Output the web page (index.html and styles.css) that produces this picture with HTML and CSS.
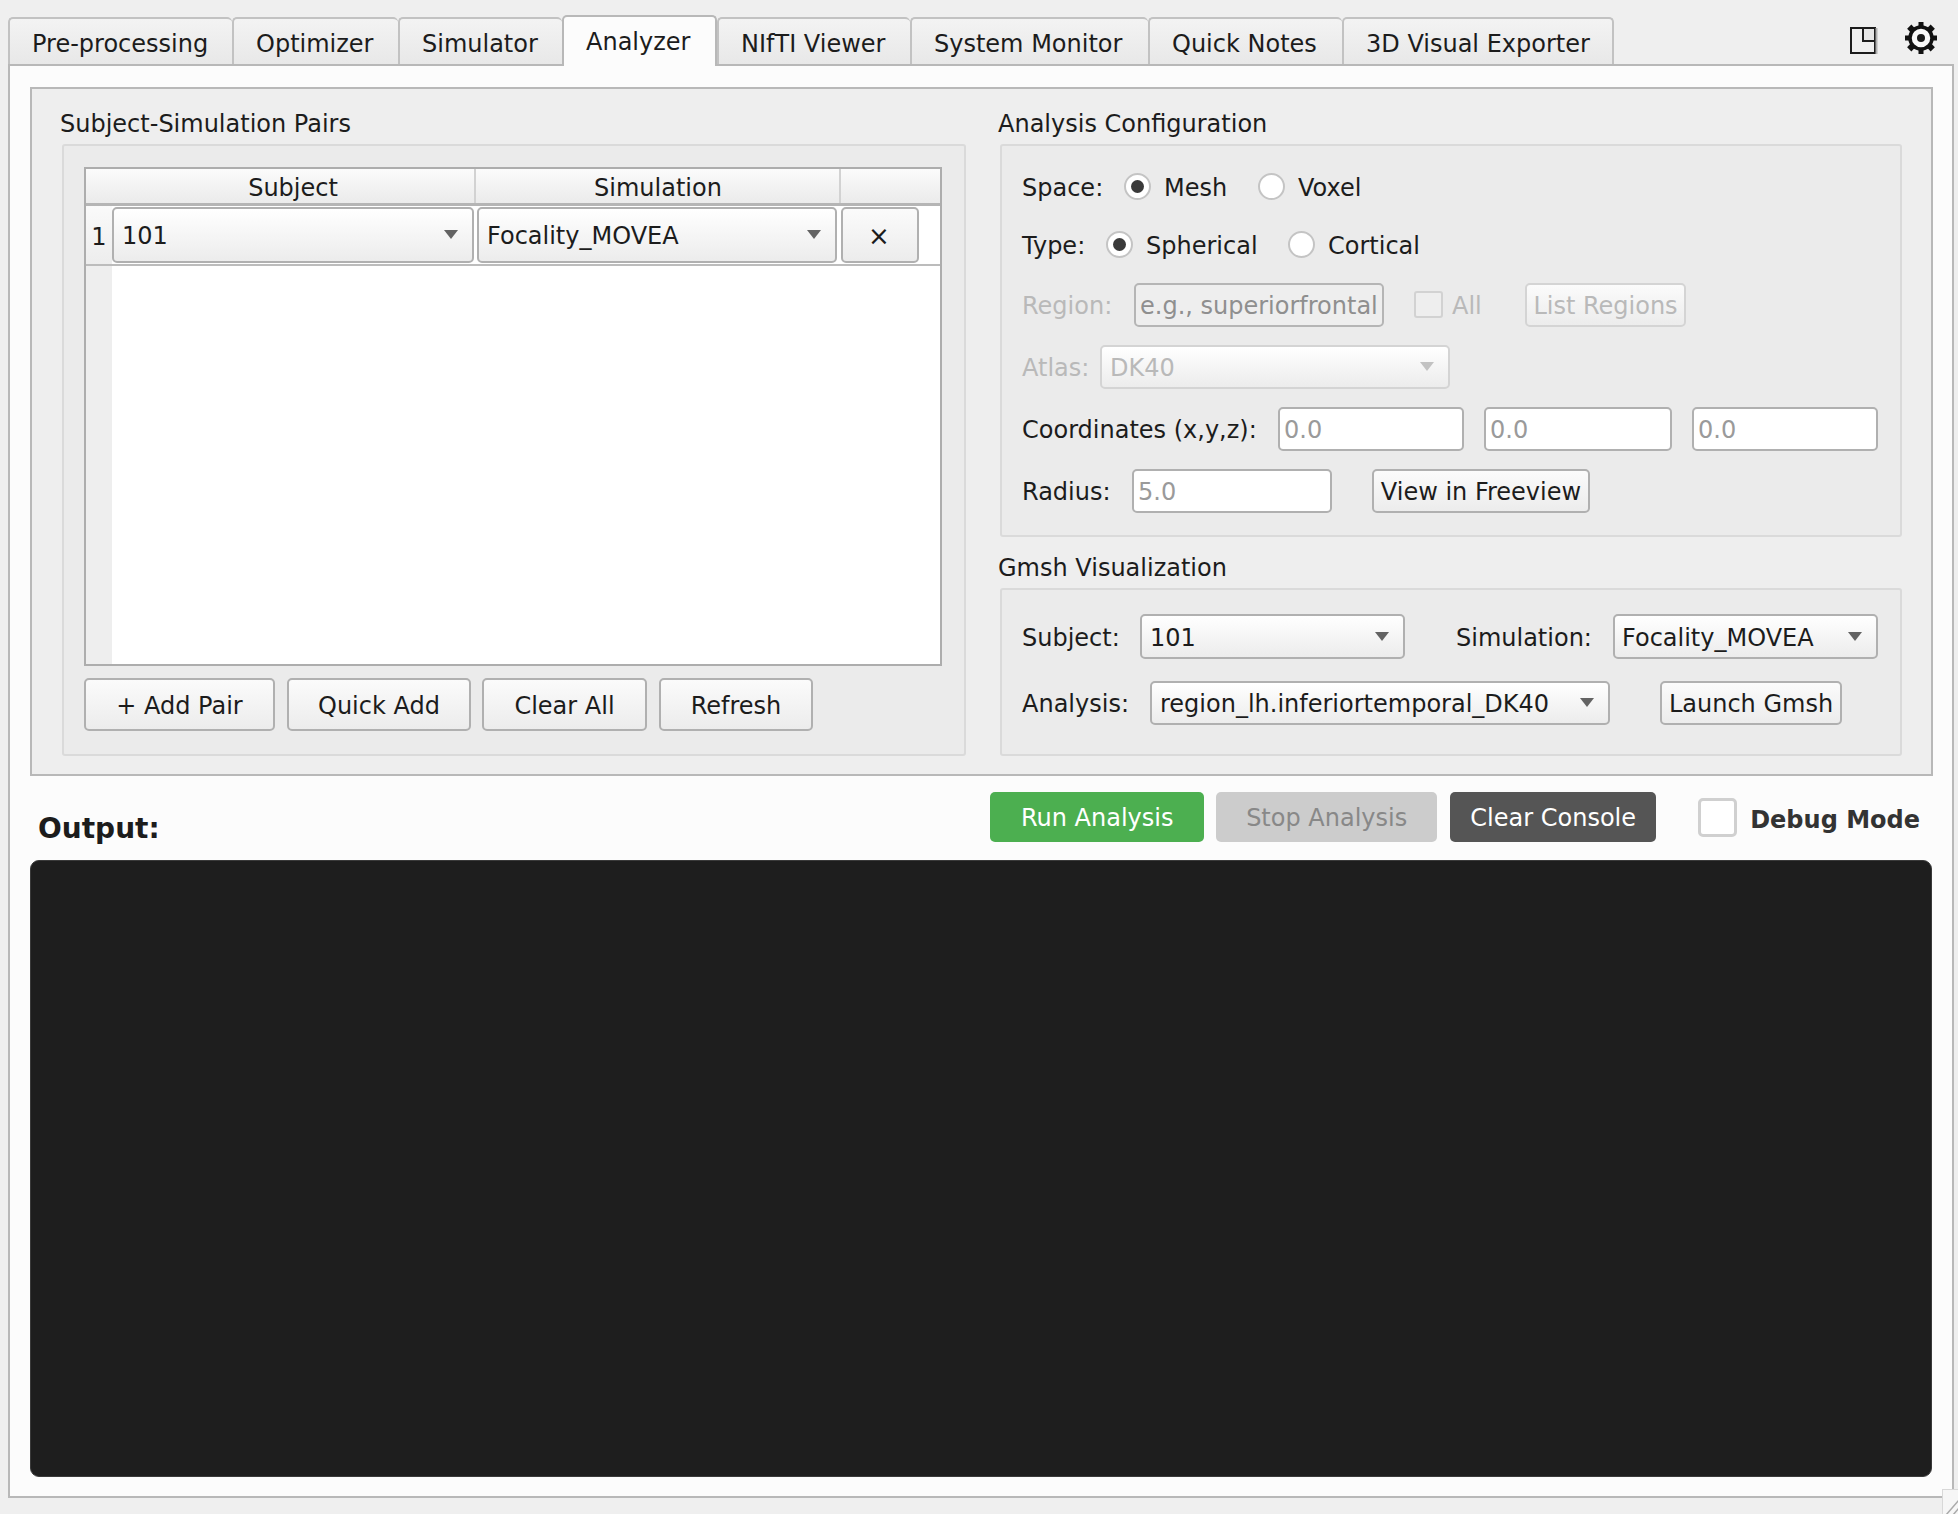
FILE: index.html
```html
<!DOCTYPE html>
<html lang="en">
<head>
<meta charset="utf-8">
<title>Analyzer</title>
<link rel="stylesheet" href="styles.css">
</head>
<body>
<div class="app">
  <header class="topbar">
    <nav class="tabs">
      <div class="tab t1">Pre-processing</div>
      <div class="tab t2">Optimizer</div>
      <div class="tab t3">Simulator</div>
      <div class="tab active t4">Analyzer</div>
      <div class="tab t5">NIfTI Viewer</div>
      <div class="tab t6">System Monitor</div>
      <div class="tab t7">Quick Notes</div>
      <div class="tab t8">3D Visual Exporter</div>
    </nav>
    <div class="corner-icons">
      <svg class="icon-layout" width="28" height="28" viewBox="0 0 28 28"><path d="M14 2H25V14H14Z" fill="#e6e6e6"/><path d="M1 1H25V26H1Z M13 1V14H25" fill="none" stroke="#1c1c1c" stroke-width="2"/><path d="M26.500 1V27" stroke="#b0b0b0" stroke-width="2"/></svg>
      <svg class="icon-gear" width="34" height="32" viewBox="0 0 34 32"><g fill="#111"><rect x="14.500" y="0" width="5" height="6"/><rect x="14.500" y="26" width="5" height="6"/><rect x="1" y="13.500" width="6" height="5"/><rect x="27" y="13.500" width="6" height="5"/><rect x="4.500" y="3.500" width="5" height="6" transform="rotate(45 7 6.500)"/><rect x="24.500" y="3.500" width="5" height="6" transform="rotate(-45 27 6.500)"/><rect x="4.500" y="22.500" width="5" height="6" transform="rotate(-45 7 25.500)"/><rect x="24.500" y="22.500" width="5" height="6" transform="rotate(45 27 25.500)"/></g><circle cx="17" cy="16" r="11" fill="#f8f8f8" stroke="#111" stroke-width="3.500"/><circle cx="17" cy="16" r="4" fill="#1a1a1a"/></svg>
    </div>
  </header>

  <main class="pane">
    <section class="config">
      <div class="col col-left">
        <div class="title">Subject-Simulation Pairs</div>
        <div class="group group-pairs">
          <div class="table">
            <div class="thead">
              <div class="th th-corner"></div>
              <div class="th th-subject">Subject</div>
              <div class="th th-sim">Simulation</div>
              <div class="th th-act"></div>
            </div>
            <div class="tbody">
              <div class="vhead"><div class="vcell">1</div></div>
              <div class="tcells">
                <div class="trow">
                  <div class="combo c-cell1"><span>101</span><i class="arrow"></i></div>
                  <div class="combo c-cell2"><span>Focality_MOVEA</span><i class="arrow"></i></div>
                  <div class="btn c-cell3">×</div>
                </div>
              </div>
            </div>
          </div>
          <div class="pair-actions">
            <div class="btn b-add">+ Add Pair</div>
            <div class="btn b-quick">Quick Add</div>
            <div class="btn b-clear">Clear All</div>
            <div class="btn b-refresh">Refresh</div>
          </div>
        </div>
      </div>

      <div class="col col-right">
        <div class="title">Analysis Configuration</div>
        <div class="group group-analysis">
          <div class="row r-space">
            <span class="lbl l-space">Space:</span>
            <i class="radio on"></i><span class="rtext rt-mesh">Mesh</span>
            <i class="radio"></i><span class="rtext">Voxel</span>
          </div>
          <div class="row r-type">
            <span class="lbl l-type">Type:</span>
            <i class="radio on"></i><span class="rtext rt-sph">Spherical</span>
            <i class="radio"></i><span class="rtext">Cortical</span>
          </div>
          <div class="row r-region off">
            <span class="lbl l-region">Region:</span>
            <div class="input i-region dis-input">e.g., superiorfrontal</div>
            <i class="check"></i><span class="rtext rt-all">All</span>
            <div class="btn b-list dis-btn">List Regions</div>
          </div>
          <div class="row r-gap off">
            <span class="lbl l-atlas">Atlas:</span>
            <div class="combo c-atlas dis-btn"><span>DK40</span><i class="arrow"></i></div>
          </div>
          <div class="row r-gap">
            <span class="lbl l-coord">Coordinates (x,y,z):</span>
            <div class="input i-x">0.0</div>
            <div class="input i-y">0.0</div>
            <div class="input i-z">0.0</div>
          </div>
          <div class="row r-gap">
            <span class="lbl l-radius">Radius:</span>
            <div class="input i-radius">5.0</div>
            <div class="btn b-free">View in Freeview</div>
          </div>
        </div>
        <div class="title title-gmsh">Gmsh Visualization</div>
        <div class="group group-gmsh">
          <div class="row r-g1">
            <span class="lbl l-subj">Subject:</span>
            <div class="combo c-subj"><span>101</span><i class="arrow"></i></div>
            <span class="lbl l-sim">Simulation:</span>
            <div class="combo c-sim"><span>Focality_MOVEA</span><i class="arrow"></i></div>
          </div>
          <div class="row r-g2">
            <span class="lbl l-an">Analysis:</span>
            <div class="combo c-an"><span>region_lh.inferiortemporal_DK40</span><i class="arrow"></i></div>
            <div class="btn b-gmsh">Launch Gmsh</div>
          </div>
        </div>
      </div>
    </section>

    <div class="console-bar">
      <div class="output-label">Output:</div>
      <div class="run-actions">
        <div class="action a-run">Run Analysis</div>
        <div class="action a-stop">Stop Analysis</div>
        <div class="action a-clear">Clear Console</div>
        <i class="debug-box"></i>
        <span class="debug-text">Debug Mode</span>
      </div>
    </div>
    <div class="console"></div>
  </main>
  <div class="grip"><svg width="16" height="25" viewBox="0 0 16 25"><path d="M3 25L16 10M10 25L16 18" stroke="#aaa" stroke-width="1.500" fill="none"/></svg></div>
</div>
</body>
</html>
```
FILE: styles.css
```css
* { box-sizing: border-box; }
html, body { margin: 0; padding: 0; }
body {
  width: 1958px;
  height: 1514px;
  overflow: hidden;
  background: #efefef;
  color: #1c1c1c;
  font-family: "DejaVu Sans", sans-serif;
  font-size: 24px;
  line-height: 28px;
}
.app { position: relative; width: 1958px; height: 1514px; display: flex; flex-direction: column; padding-top: 14px; }

/* top bar */
.topbar { height: 51px; display: flex; justify-content: space-between; padding-left: 8px; position: relative; z-index: 1; }
.tabs { display: flex; align-items: flex-end; }
.tab {
  height: 47px; margin-bottom: 1px; padding: 4px 0 0 22px; display: flex; align-items: center;
  background: linear-gradient(#f3f3f3, #e8e8e8);
  border: 2px solid #c2c2c2; border-bottom: 0; border-right-width: 0; border-radius: 5px 5px 0 0;
}
.tab.t8 { border-right-width: 2px; }
.tab.active { height: 51px; margin-bottom: -1px; background: #fcfcfc; border: 2px solid #b8b8b8; border-bottom: 0; padding: 0 0 0 22px; }
.t1 { width: 224px; } .t2 { width: 166px; } .t3 { width: 164px; } .t4 { width: 155px; }
.t5 { width: 193px; } .t6 { width: 238px; } .t7 { width: 194px; } .t8 { width: 272px; }
.corner-icons { display: flex; align-items: flex-start; gap: 26px; padding: 8px 20px 0 0; }
.icon-layout { margin-top: 5px; }

/* pane */
.pane {
  width: 1946px; height: 1434px; margin-left: 8px; margin-top: -1px;
  background: #fcfcfc; border: 2px solid #b8b8b8; padding: 21px 0 0 20px;
}
.config {
  width: 1903px; height: 689px; display: flex; gap: 32px; padding: 0 0 0 28px;
  background: #eeeeee; border: 2px solid #b8b8b8;
}
.col-left { width: 906px; }
.col-right { width: 905px; }
.title { height: 24px; line-height: 24px; margin-top: 23px; margin-bottom: 8px; }
.title-gmsh { margin-top: 19px; margin-bottom: 8px; }
.group { background: #ebebeb; border: 2px solid #dadada; border-radius: 3px; }
.group-pairs { width: 904px; height: 612px; margin-left: 2px; padding: 21px 0 0 20px; }
.group-analysis { width: 902px; height: 393px; margin-left: 2px; padding: 27px 0 0 20px; }
.group-gmsh { width: 902px; height: 168px; margin-left: 2px; padding: 24px 0 0 20px; }

/* table */
.table { width: 858px; height: 499px; border: 2px solid #adadad; background: #fff; display: flex; flex-direction: column; }
.thead { height: 37px; flex: none; display: flex; background: linear-gradient(#fbfbfb, #ebebeb); border-bottom: 3px solid #b5b5b5; }
.th { height: 34px; text-align: center; line-height: 38px; border-right: 2px solid #d2d2d2; }
.th-corner { width: 26px; border-right: 0; }
.th-subject { width: 364px; }
.th-sim { width: 365px; padding-left: 1px; }
.th-act { width: 99px; border-right: 0; }
.tbody { flex: 1; display: flex; }
.vhead { width: 26px; flex: none; background: #eeeeee; }
.vcell { height: 60px; line-height: 62px; text-align: center; background: linear-gradient(#fafafa, #ededed); border-bottom: 2px solid #bcbcbc; }
.tcells { flex: 1; }
.trow { height: 60px; display: flex; padding-top: 1px; border-bottom: 2px solid #bcbcbc; }
.c-cell1 { width: 362px; height: 56px; margin-right: 3px; padding-left: 8px; border-left-width: 3px; }
.c-cell2 { width: 360px; height: 56px; margin-right: 4px; padding-left: 5px; padding-right: 13px; }
.c-cell3 { width: 78px; height: 56px; padding-right: 2px; font-size: 26px; }

/* widgets */
.combo, .btn, .input { display: flex; align-items: center; border: 2px solid #b0b0b0; border-radius: 5px; flex: none; padding-top: 2px; }
.combo { justify-content: space-between; padding-right: 14px; padding-left: 8px; background: linear-gradient(#ffffff, #ececec); }
.btn { justify-content: center; background: linear-gradient(#fbfbfb, #ececec); }
.input { background: #fff; color: #9a9a9a; padding-left: 4px; }
.arrow { width: 0; height: 0; margin-top: -3px; border-left: 7px solid transparent; border-right: 7px solid transparent; border-top: 9px solid #636363; flex: none; }
.row { display: flex; align-items: center; }
.lbl { flex: none; white-space: nowrap; padding-top: 2px; }
.radio { width: 27px; height: 27px; margin-top: -2px; flex: none; border-radius: 50%; background: #fff; border: 2px solid #c4c4c4; display: flex; align-items: center; justify-content: center; }
.radio.on::after { content: ""; width: 13px; height: 13px; background: #3a3a3a; border-radius: 50%; }
.rtext { flex: none; white-space: nowrap; padding-top: 2px; }
.check { width: 29px; height: 27px; margin-top: -2px; flex: none; border: 2px solid #d2d2d2; border-radius: 3px; background: #eee; }

.r-space { height: 28px; }
.r-type { height: 28px; margin-top: 30px; }
.r-region { height: 44px; margin-top: 24px; }
.r-gap { height: 44px; margin-top: 18px; }
.off .lbl, .off .rtext, .off .combo, .off .btn { color: #b9b9b9; }
.off .arrow { border-top-color: #c2c2c2; }
.dis-input { background: #eeeeee; color: #8f8f8f; border-color: #b5b5b5; }
.dis-btn { border-color: #d4d4d4; }
.l-space { width: 102px; } .rt-mesh { width: 94px; margin-left: 13px; } .r-space .rtext:last-child { margin-left: 13px; }
.l-type { width: 84px; } .rt-sph { width: 142px; margin-left: 13px; } .r-type .rtext:last-child { margin-left: 13px; }
.l-region { width: 112px; } .i-region { width: 250px; height: 44px; margin-right: 30px; }
.rt-all { width: 73px; margin-left: 9px; }
.b-list { width: 161px; height: 44px; }
.l-atlas { width: 78px; } .c-atlas { width: 350px; height: 44px; }
.l-coord { width: 256px; } .i-x { width: 186px; height: 44px; margin-right: 20px; } .i-y { width: 188px; height: 44px; margin-right: 20px; } .i-z { width: 186px; height: 44px; }
.l-radius { width: 110px; } .i-radius { width: 200px; height: 44px; margin-right: 40px; } .b-free { width: 218px; height: 44px; }
.r-g1 { height: 45px; }
.r-g2 { height: 44px; margin-top: 22px; }
.l-subj { width: 118px; } .c-subj { width: 265px; height: 45px; margin-right: 51px; } .l-sim { width: 157px; } .c-sim { width: 265px; height: 45px; padding-left: 7px; }
.l-an { width: 128px; } .c-an { width: 460px; height: 44px; margin-right: 50px; } .b-gmsh { width: 182px; height: 44px; }

.pair-actions { display: flex; margin-top: 12px; }
.pair-actions .btn { height: 53px; margin-right: 12px; }
.b-add { width: 191px; } .b-quick { width: 184px; } .pair-actions .b-quick { margin-right: 11px; } .b-clear { width: 165px; } .b-refresh { width: 154px; }

/* console bar */
.console-bar { width: 1903px; height: 84px; display: flex; justify-content: space-between; }
.output-label { font-size: 28px; font-weight: 700; margin: 37px 0 0 8px; line-height: 32px; }
.run-actions { display: flex; align-items: flex-start; padding-top: 16px; }
.action { height: 50px; padding-top: 2px; display: flex; align-items: center; justify-content: center; border-radius: 5px; color: #fff; }
.a-run { width: 214px; background: #4caf50; margin-right: 12px; }
.a-stop { width: 221px; background: #cccccc; color: #888; margin-right: 13px; }
.a-clear { width: 206px; background: #555; margin-right: 42px; }
.debug-box { width: 39px; height: 39px; margin-top: 6px; border: 3px solid #d0d0d0; background: #fff; border-radius: 5px; flex: none; }
.debug-text { font-weight: 700; margin: 14px 13px 0 13px; white-space: nowrap; color: #333; }
.console { width: 1902px; height: 617px; background: #1e1e1e; border: 1px solid #3a3a3a; border-radius: 9px; }

.grip { position: absolute; right: 0; top: 1489px; width: 16px; height: 25px; background: #f6f6f6; border-left: 1px solid #d8d8d8; border-top: 1px solid #d8d8d8; }
.grip svg { display: block; }
```
